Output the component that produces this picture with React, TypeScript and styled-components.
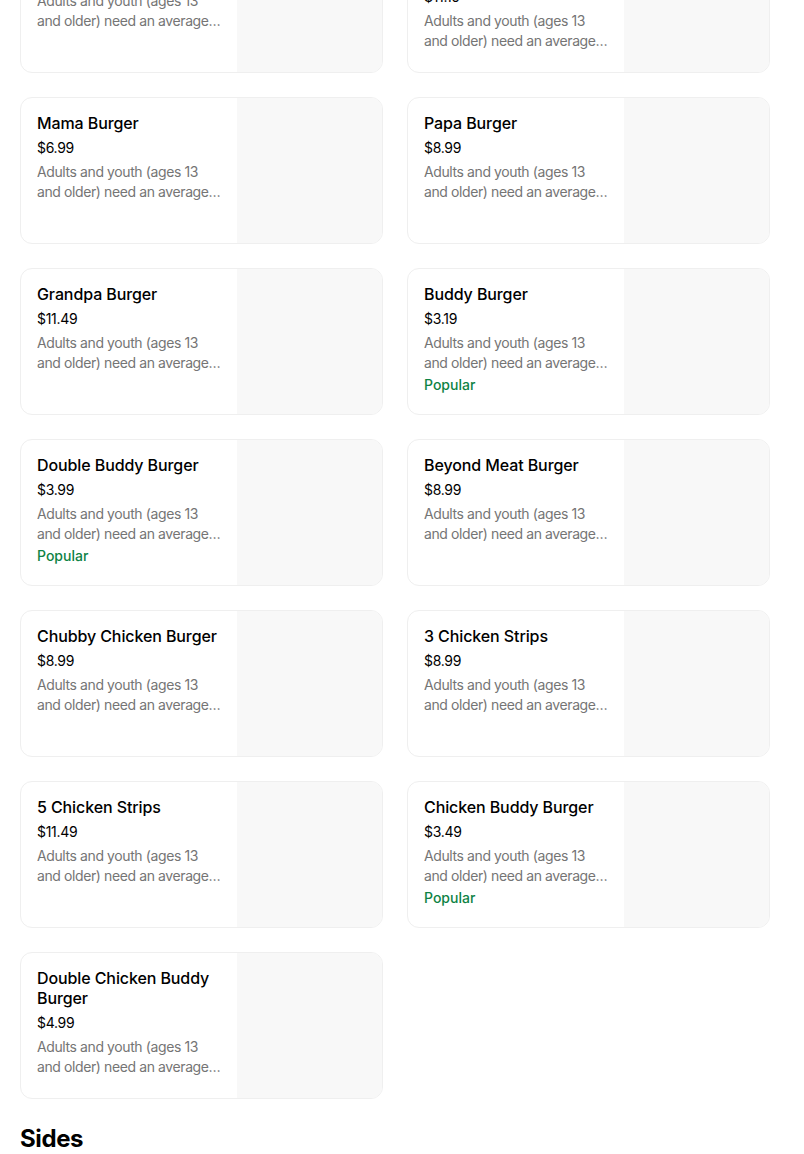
import React from "react";
import styled, { createGlobalStyle } from "styled-components";

const Global = createGlobalStyle`
  html, body { margin: 0; padding: 0; background: #ffffff; }
  body { font-family: Inter, "Noto Sans", "Liberation Sans", sans-serif; color: #000; overflow: hidden; }
  * { box-sizing: border-box; }
`;

const Page = styled.div`
  padding: 0 20px;
  margin-top: -74px;
`;

const Grid = styled.div`
  display: grid;
  grid-template-columns: repeat(2, 363px);
  column-gap: 24px;
  row-gap: 24px;
`;

const Card = styled.div`
  display: flex;
  height: 147px;
  border: 1px solid #efefef;
  border-radius: 12px;
  overflow: hidden;
  background: #fff;
`;

const Info = styled.div`
  flex: 1;
  min-width: 0;
  padding: 15px 16px 0 16px;
  display: flex;
  flex-direction: column;
`;

const Title = styled.div`
  font-size: 16px;
  line-height: 20px;
  font-weight: 500;
  color: #000;
  letter-spacing: -0.1px;
`;

const Price = styled.div`
  margin-top: 5px;
  font-size: 14px;
  line-height: 20px;
  color: #000;
  letter-spacing: -0.3px;
`;

const Desc = styled.div`
  margin-top: 4px;
  font-size: 14px;
  line-height: 20px;
  color: #757575;
  display: -webkit-box;
  -webkit-line-clamp: 2;
  -webkit-box-orient: vertical;
  overflow: hidden;
  letter-spacing: -0.4px;
`;

const Badge = styled.div`
  margin-top: 3px;
  font-size: 14px;
  line-height: 18px;
  font-weight: 500;
  color: #0e8345;
`;

const Thumb = styled.div`
  width: 145px;
  height: 145px;
  flex-shrink: 0;
  background: #f8f8f8;
`;

const SectionTitle = styled.h2`
  margin: 24px 0 0 0;
  font-size: 24px;
  line-height: 32px;
  font-weight: 700;
  letter-spacing: -0.4px;
  color: #000;
`;

const DESC =
  "Adults and youth (ages 13 and older) need an average of 2,000 calories a day, and children (ages 2 to 12) need an average of 1,500 calories a day.";

type Item = { name: string; price: string; popular?: boolean };

const items: Item[] = [
  { name: "Big Buddy Burger", price: "$9.99" },
  { name: "Double Beyond Meat Burger", price: "$11.19" },
  { name: "Mama Burger", price: "$6.99" },
  { name: "Papa Burger", price: "$8.99" },
  { name: "Grandpa Burger", price: "$11.49" },
  { name: "Buddy Burger", price: "$3.19", popular: true },
  { name: "Double Buddy Burger", price: "$3.99", popular: true },
  { name: "Beyond Meat Burger", price: "$8.99" },
  { name: "Chubby Chicken Burger", price: "$8.99" },
  { name: "3 Chicken Strips", price: "$8.99" },
  { name: "5 Chicken Strips", price: "$11.49" },
  { name: "Chicken Buddy Burger", price: "$3.49", popular: true },
  { name: "Double Chicken Buddy Burger", price: "$4.99" },
];

export default function App() {
  return (
    <>
      <Global />
      <Page>
        <Grid>
          {items.map((it) => (
            <Card key={it.name}>
              <Info>
                <Title>{it.name}</Title>
                <Price>{it.price}</Price>
                <Desc>{DESC}</Desc>
                {it.popular && <Badge>Popular</Badge>}
              </Info>
              <Thumb />
            </Card>
          ))}
        </Grid>
        <SectionTitle>Sides</SectionTitle>
      </Page>
    </>
  );
}
